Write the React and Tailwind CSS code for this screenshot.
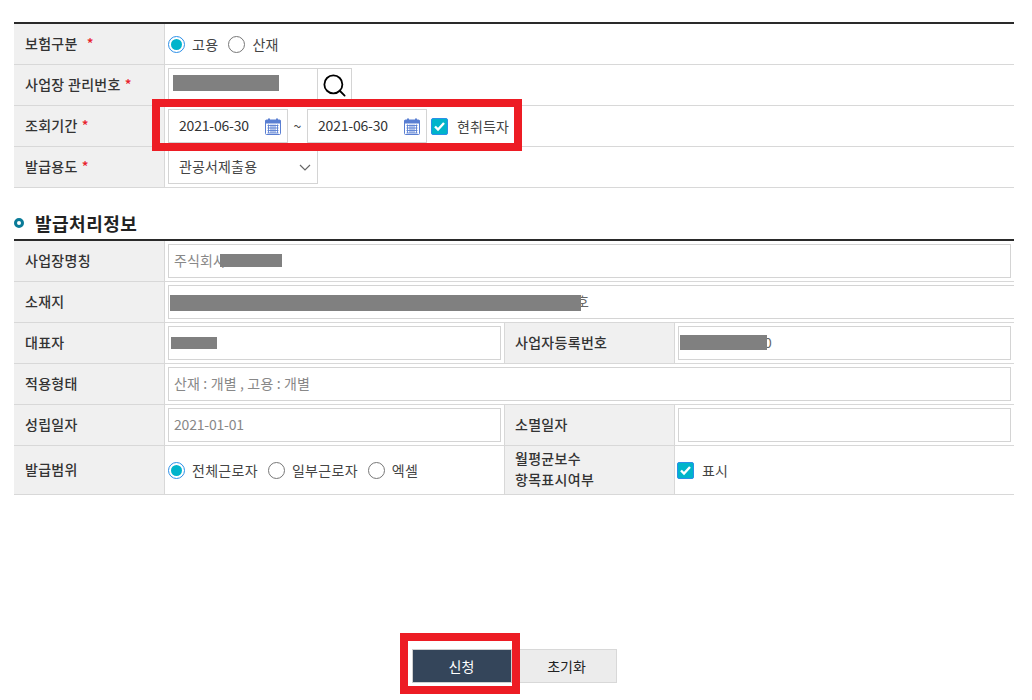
import { Search } from "lucide-react";

const input = "h-[34px] border border-[#d4d4d4] bg-white text-sm tracking-[0.15px] pl-[5px] pr-[5px] pb-[2px] flex items-center";
const th = "shrink-0 bg-[#f0f0f0] flex items-center pb-[2px] text-sm tracking-[0.3px] text-[#333] font-medium";

function Row({ label, star, children, last }) {
  return (
    <div className={`flex border-b border-[#d8d8d8] ${last ? "h-[49px]" : "h-[41px]"}`}>
      <div className={`${th} w-[151px] pl-[11px] border-r border-[#d8d8d8]`}>
        {label}
        {star}
      </div>
      {children}
    </div>
  );
}

function Star() {
  return <span className="text-[#e8202a] ml-1">*</span>;
}

function Radio({ on, label }) {
  return (
    <label className="flex items-center gap-[7px] text-sm tracking-[0.3px] text-[#444]">
      {on ? (
        <span className="w-[17px] h-[17px] rounded-full border border-[#2b8fe8] bg-white flex items-center justify-center">
          <span className="w-[11px] h-[11px] rounded-full bg-[#00b4cb]" />
        </span>
      ) : (
        <span className="w-[17px] h-[17px] rounded-full border border-[#777] bg-white" />
      )}
      {label}
    </label>
  );
}

function Check({ label, gap }) {
  return (
    <label className={`flex items-center text-sm tracking-[0.1px] text-[#444] ${gap}`}>
      <span className="w-[17px] h-[17px] rounded-[2px] border border-[#2b8fe8] bg-[#00b4cb] flex items-center justify-center">
        <svg width="13" height="11" viewBox="0 0 13 11" fill="none">
          <path d="M2 5.5 L5 8.5 L11 2" stroke="#fff" strokeWidth="2.4" />
        </svg>
      </span>
      {label}
    </label>
  );
}

function CalendarIcon() {
  return (
    <svg width="16" height="17" viewBox="0 0 16 17" className="shrink-0 mt-[2px]">
      <rect x="0.5" y="2" width="15" height="14.5" rx="1" fill="none" stroke="#5a7fd2" />
      <rect x="0.5" y="2" width="15" height="3.5" fill="#5a7fd2" />
      <rect x="3" y="0.5" width="2" height="3" fill="#5a7fd2" />
      <rect x="11" y="0.5" width="2" height="3" fill="#5a7fd2" />
      <path
        d="M2.5 7.5h11M2.5 10h11M2.5 12.5h11M2.5 15h11M3.5 6.5v8.5M6 6.5v8.5M8 6.5v8.5M10 6.5v8.5M12.5 6.5v8.5"
        stroke="#5a7fd2"
        strokeWidth="0.9"
      />
    </svg>
  );
}

function DateBox({ value }) {
  return (
    <div className={`${input} w-[120px] pl-[10px] pr-[6px] justify-between text-[#333]`}>
      <span className="tracking-[-0.2px]">{value}</span>
      <CalendarIcon />
    </div>
  );
}

// 가림 처리된 영역
function Mask({ className }) {
  return <div className={`absolute bg-[#808080] ${className}`} />;
}

export default function App() {
  return (
    <div
      className="relative h-[700px] w-[1032px] overflow-hidden bg-white pl-[14px] pt-[22px]"
      style={{ fontFamily: '"Noto Sans CJK KR", "Noto Sans", sans-serif' }}
    >
      <div className="w-[1000px] border-t-2 border-[#2a2a2a]">
        <Row label="보험구분" star={<span className="text-[#e8202a] ml-[9px]">*</span>}>
          <div className="flex items-center gap-[10px] pl-[3px]">
            <Radio on label="고용" />
            <Radio label="산재" />
          </div>
        </Row>
        <Row label="사업장 관리번호" star={<Star />}>
          <div className="flex pl-[3px] pt-[3px]">
            <div className={`${input} relative w-[150px]`}>
              <Mask className="left-[4px] top-[6px] w-[106px] h-4" />
            </div>
            <div className="h-[34px] w-[35px] -ml-[1px] border border-[#d4d4d4] flex items-center justify-center">
              <Search size={27} strokeWidth={1.6} className="text-black" />
            </div>
          </div>
        </Row>
        <Row label="조회기간" star={<Star />}>
          <div className="flex items-center h-[34px] mt-[3px] ml-[3px]">
            <DateBox value="2021-06-30" />
            <span className="w-[19px] text-center text-sm text-[#444]">~</span>
            <DateBox value="2021-06-30" />
            <Check label="현취득자" gap="gap-[9px] ml-[4px]" />
          </div>
        </Row>
        <Row label="발급용도" star={<Star />}>
          <div className="flex pl-[3px] pt-[3px]">
            <div className={`${input} w-[150px] pl-[10px] justify-between text-[#444]`}>
              관공서제출용
              <svg width="12" height="7" viewBox="0 0 12 7" fill="none" className="mr-[1px] mt-[2px]">
                <path d="M1 1 L6 6 L11 1" stroke="#666" strokeWidth="1.2" />
              </svg>
            </div>
          </div>
        </Row>
      </div>

      <div className="w-[1000px] h-[51px] flex items-end">
        <div className="flex items-center pb-[4px] w-full">
          <span className="w-[10px] h-[10px] rounded-full border-[3px] border-[#0a7b98] bg-white" />
          <h2 className="ml-[11px] text-lg tracking-[0.5px] font-semibold text-[#222] leading-6">발급처리정보</h2>
        </div>
      </div>

      <div className="w-[1000px] border-t-2 border-[#2a2a2a]">
        <Row label="사업장명칭">
          <div className="flex-1 px-[3px] pt-[3px]">
            <div className={`${input} relative w-full text-[#888]`}>
              주식회사
              <Mask className="left-[51px] top-[9px] w-[62px] h-[13px]" />
            </div>
          </div>
        </Row>
        <Row label="소재지">
          <div className="flex-1 pl-[3px] pt-[3px] overflow-hidden">
            <div className={`${input} relative w-[880px] text-[#666]`}>
              <span className="ml-[402px]">호</span>
              <Mask className="left-[1px] top-[9px] w-[411px] h-4" />
            </div>
          </div>
        </Row>
        <Row label="대표자">
          <div className="w-[339px] px-[3px] pt-[3px]">
            <div className={`${input} relative w-full`}>
              <Mask className="left-[2px] top-[10px] w-[46px] h-3" />
            </div>
          </div>
          <div className={`${th} w-[171px] pl-[10px] border-x border-[#d8d8d8]`}>사업자등록번호</div>
          <div className="flex-1 px-[3px] pt-[3px]">
            <div className={`${input} relative w-full text-[#666]`}>
              <span className="ml-[80px]">0</span>
              <Mask className="left-[1px] top-[8px] w-[87px] h-[15px]" />
            </div>
          </div>
        </Row>
        <Row label="적용형태">
          <div className="flex-1 px-[3px] pt-[3px]">
            <div className={`${input} w-full text-[#888]`}>산재 : 개별 , 고용 : 개별</div>
          </div>
        </Row>
        <Row label="성립일자">
          <div className="w-[339px] px-[3px] pt-[3px]">
            <div className={`${input} w-full text-[#888]`}>
              <span className="tracking-[-0.2px]">2021-01-01</span>
            </div>
          </div>
          <div className={`${th} w-[171px] pl-[10px] border-x border-[#d8d8d8]`}>소멸일자</div>
          <div className="flex-1 px-[3px] pt-[3px]">
            <div className={`${input} w-full`} />
          </div>
        </Row>
        <Row label="발급범위" last>
          <div className="w-[339px] flex items-center gap-[10px] pl-[3px]">
            <Radio on label="전체근로자" />
            <Radio label="일부근로자" />
            <Radio label="엑셀" />
          </div>
          <div className={`${th} w-[171px] pl-[10px] border-x border-[#d8d8d8] leading-[21px]`}>
            <span>
              월평균보수
              <br />
              항목표시여부
            </span>
          </div>
          <div className="flex-1 flex items-center pl-[2px]">
            <Check label="표시" gap="gap-[8px]" />
          </div>
        </Row>
      </div>

      <div className="w-[1000px] flex justify-center pt-[154px]">
        <button className="w-[100px] h-[34px] bg-[#34455a] border border-[#cfcfcf] text-white text-sm">신청</button>
        <button className="w-[105px] h-[34px] pl-[6px] bg-[#ececec] border border-l-0 border-[#d8d8d8] text-[#222] text-sm">초기화</button>
      </div>

      {/* 강조 표시 */}
      <div className="absolute left-[152px] top-[99px] w-[370px] h-[52px] border-8 border-[#ed1c24]" />
      <div className="absolute left-[400px] top-[633px] w-[120px] h-[61px] border-8 border-[#ed1c24]" />
    </div>
  );
}
